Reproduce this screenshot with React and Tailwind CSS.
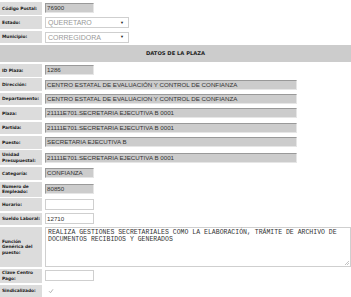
import React from 'react';

const lbl = "bg-[#dcdcdc] flex items-center px-[2px] font-bold text-[4.4px] leading-[5.4px] tracking-[-0.05px] text-[#222] font-['DejaVu_Sans',sans-serif]";
const val = "flex items-center pl-[1px]";
const ro = "h-[10px] bg-[#cccccc] border-t-[1.5px] border-l border-[#999] border-b border-r border-b-[#e6e6e6] border-r-[#e6e6e6] text-[6.2px] text-[#333] font-['Liberation_Sans',sans-serif] flex items-center pl-[1px] leading-none";
const wh = "h-[11px] bg-white border border-[#cfcfcf] text-[6.2px] text-[#333] font-['Liberation_Sans',sans-serif] flex items-center pl-[1px] leading-none";

function Sel({ text }) {
  return (
    <div className="h-[11px] w-[84px] bg-white border border-[#cfcfcf] flex items-center justify-between px-[2px] text-[7px] text-[#999] font-['Liberation_Sans',sans-serif] leading-none">
      <span>{text}</span>
      <span className="text-[4px] text-[#222] mr-[2px]">▼</span>
    </div>
  );
}

export default function App() {
  const rows = [
    ['Dirección:', 'CENTRO ESTATAL DE EVALUACIÓN Y CONTROL DE CONFIANZA'],
    ['Departamento:', 'CENTRO ESTATAL DE EVALUACION Y CONTROL DE CONFIANZA'],
    ['Plaza:', '21111E701.SECRETARIA EJECUTIVA B 0001'],
    ['Partida:', '21111E701.SECRETARIA EJECUTIVA B 0001'],
    ['Puesto:', 'SECRETARIA EJECUTIVA B'],
  ];
  return (
    <div className="w-[351px] h-[297px] bg-white overflow-hidden pt-[2px]">
      <div className="grid grid-cols-[42px_1fr] gap-x-[2px] gap-y-[1.8px]">
        <div className={lbl + " h-[12.6px]"}>Código Postal:</div>
        <div className={val}><div className={ro + " w-[49px]"}>76900</div></div>

        <div className={lbl + " h-[12.6px]"}>Estado:</div>
        <div className={val}><Sel text="QUERETARO" /></div>

        <div className={lbl + " h-[12.6px]"}>Municipio:</div>
        <div className={val}><Sel text="CORREGIDORA" /></div>

        <div className="col-span-2 h-[17px] bg-[#cccccc] flex items-center justify-center font-bold text-[5.2px] text-[#222] font-['DejaVu_Sans',sans-serif]">DATOS DE LA PLAZA</div>

        <div className={lbl + " h-[12.6px]"}>ID Plaza:</div>
        <div className={val}><div className={ro + " w-[49px]"}>1286</div></div>

        {rows.map(([l, v]) => (
          <React.Fragment key={l}>
            <div className={lbl + " h-[12.6px]"}>{l}</div>
            <div className={val}><div className={ro + " w-[252px]"}>{v}</div></div>
          </React.Fragment>
        ))}

        <div className={lbl + " h-[15px]"}>Unidad Presupuestal:</div>
        <div className={val}><div className={ro + " w-[252px]"}>21111E701.SECRETARIA EJECUTIVA B 0001</div></div>

        <div className={lbl + " h-[12.6px]"}>Categoría:</div>
        <div className={val}><div className={ro + " w-[49px]"}>CONFIANZA</div></div>

        <div className={lbl + " h-[15px]"}>Numero de Empleado:</div>
        <div className={val}><div className={ro + " w-[49px]"}>80850</div></div>

        <div className={lbl + " h-[12.6px]"}>Horario:</div>
        <div className={val}><div className={wh + " w-[49px]"}></div></div>

        <div className={lbl + " h-[12.6px] whitespace-nowrap"}>Sueldo Laboral:</div>
        <div className={val}><div className={wh + " w-[49px]"}>12710</div></div>

        <div className={lbl + " h-[40px]"}>Función Genérica del puesto:</div>
        <div className="h-[40px] pl-[1px]">
          <div className="relative h-[40px] w-[306px] bg-white border border-[#cfcfcf] px-[2px] py-[1px] text-[6.5px] leading-[7px] text-[#333] font-['Liberation_Mono',monospace]">
            REALIZA GESTIONES SECRETARIALES COMO LA ELABORACIÓN, TRÁMITE DE ARCHIVO DE DOCUMENTOS RECIBIDOS Y GENERADOS
            <svg className="absolute right-[1px] bottom-[1px]" width="5" height="5" viewBox="0 0 5 5">
              <path d="M1 5 L5 1 M3 5 L5 3" stroke="#aaa" strokeWidth="0.7" />
            </svg>
          </div>
        </div>

        <div className={lbl + " h-[14px]"}>Clave Centro Pago:</div>
        <div className={val}><div className={wh + " w-[49px]"}></div></div>

        <div className={lbl + " h-[12.6px]"}>Sindicalizado:</div>
        <div className={val}>
          <div className="ml-[2px] w-[7px] h-[7px] flex items-center justify-center">
            <svg width="6" height="6" viewBox="0 0 6 6"><path d="M1 3.2 L2.5 4.7 L5 1.3" stroke="#aaa" strokeWidth="0.9" fill="none" /></svg>
          </div>
        </div>
      </div>
    </div>
  );
}
